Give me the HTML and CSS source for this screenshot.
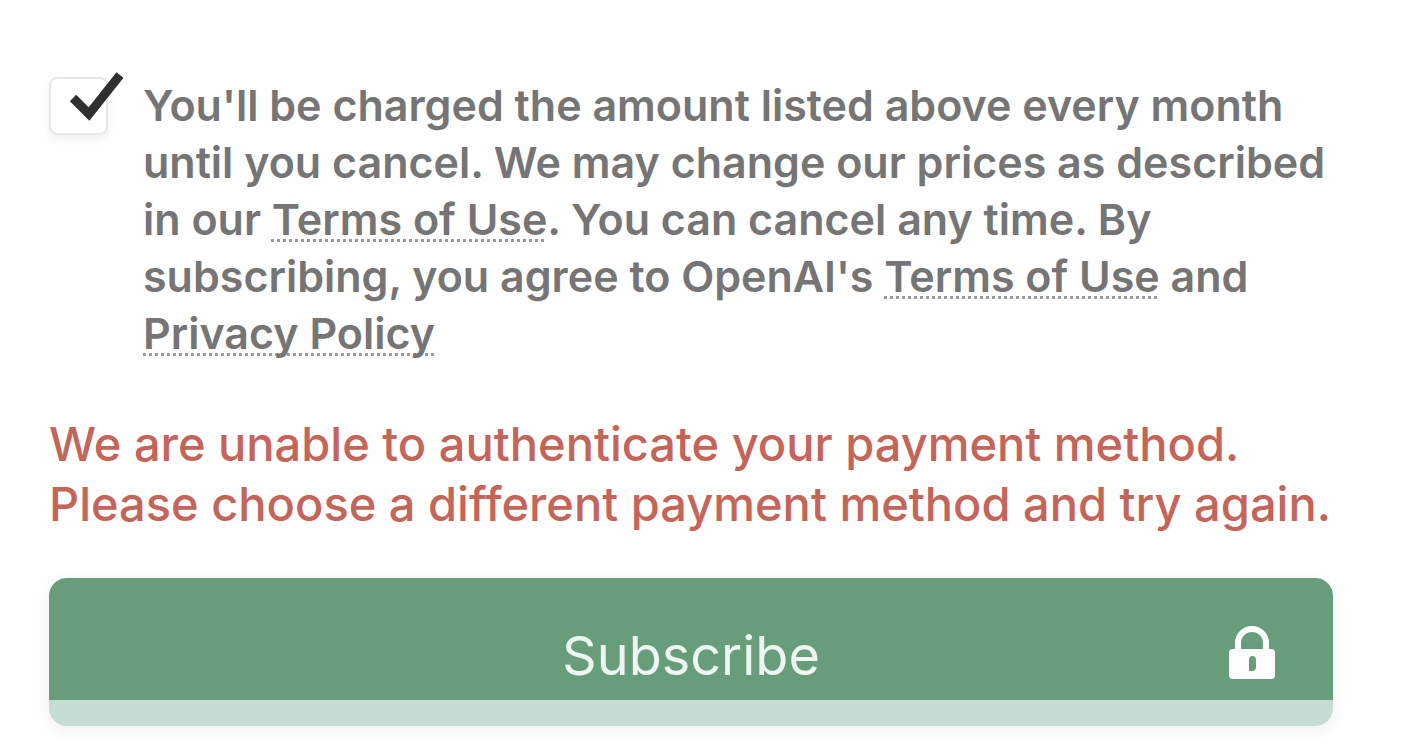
FILE: index.html
```html
<!DOCTYPE html>
<html lang="en">
<head>
<meta charset="UTF-8">
<meta name="viewport" content="width=device-width, initial-scale=1.0">
<title>Subscribe</title>
<link rel="stylesheet" href="styles.css">
</head>
<body>

<form class="checkout">
    <div class="consent">
        <div class="consent-box">
            <input type="checkbox" id="consent" checked>
            <svg class="tick" viewBox="0 0 56 52" aria-hidden="true">
                <path d="M4 27 L20 43 L51 4" fill="none" stroke="#303030" stroke-width="9"/>
            </svg>
        </div>
        <label for="consent">You'll be charged the amount listed above every month until you cancel. We may change our prices as described in our <a href="#">Terms of Use</a>. You can cancel any time. By subscribing, you agree to OpenAI's <a href="#">Terms of Use</a> and <a href="#">Privacy Policy</a></label>
    </div>

    <p class="error">We are unable to authenticate your payment method. Please choose a different payment method and try again.</p>

    <button type="submit" class="subscribe">
        <span>Subscribe</span>
        <svg class="lock" viewBox="0 0 46 54" aria-hidden="true">
            <path d="M9 24 V17 a14 14 0 0 1 28 0 V24" fill="none" stroke="#fff" stroke-width="6"/>
            <path fill="#fff" fill-rule="evenodd" d="M4 23 H42 a4 4 0 0 1 4 4 V49 a4 4 0 0 1 -4 4 H4 a4 4 0 0 1 -4 -4 V27 a4 4 0 0 1 4 -4 Z M23 30 a4 4 0 0 0 -3 4 V45 H24 a4 4 0 0 0 3 -4 V34 a4 4 0 0 0 -4 -4 Z"/>
        </svg>
    </button>
</form>

</body>
</html>
```
FILE: styles.css
```css
body {
    margin: 0;
    background-color: #fefefe;
    font-family: Inter, "Liberation Sans", sans-serif;
}
.checkout {
    padding: 77px 89px 16px 49px;
}
.consent {
    display: flex;
    gap: 35px;
}
.consent-box {
    position: relative;
    flex: none;
    width: 59px;
    height: 58px;
}
.consent-box input {
    appearance: none;
    display: block;
    width: 100%;
    height: 100%;
    margin: 0;
    border: 2px solid #e8e8e8;
    border-radius: 8px;
    background-color: white;
    box-shadow: 0 4px 8px rgba(0, 0, 0, 0.06);
}
.tick {
    position: absolute;
    left: 20px;
    top: -6px;
    width: 56px;
    height: 52px;
    pointer-events: none;
}
.consent label {
    flex: 1;
    color: #757575;
    font-size: 43px;
    font-weight: 600;
    line-height: 57px;
}
.consent a {
    color: inherit;
    text-decoration: underline dotted 3px #9a9a9a;
    text-decoration-skip-ink: none;
    text-underline-offset: 4px;
}
.error {
    margin: 52px 0 44px;
    color: #c4655a;
    font-size: 47px;
    font-weight: 500;
    line-height: 60px;
}
.subscribe {
    position: relative;
    display: block;
    width: 100%;
    padding: 48px 0 14px;
    border: none;
    border-bottom: 26px solid #c5ddd1;
    border-radius: 18px;
    background-color: #689d7c;
    box-shadow: 0 4px 16px rgba(0, 0, 0, 0.06);
    color: #edf6f0;
    font-family: inherit;
    font-size: 54px;
    line-height: 60px;
}
.lock {
    position: absolute;
    right: 58px;
    top: 48px;
    width: 46px;
    height: 54px;
}
```
